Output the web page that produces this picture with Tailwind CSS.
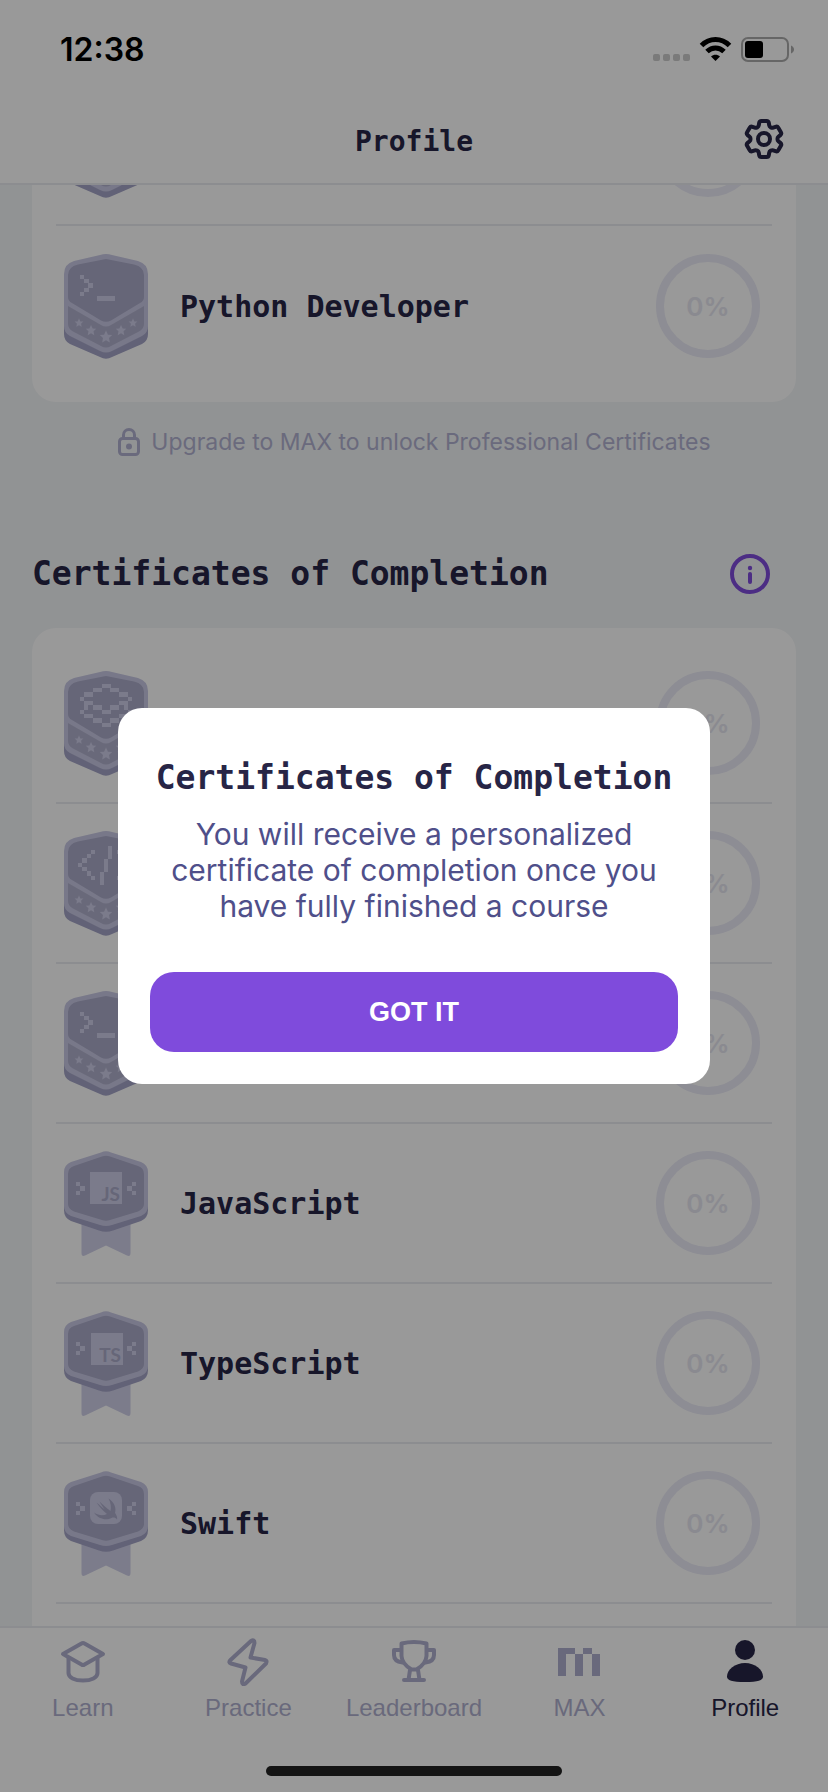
<!DOCTYPE html>
<html lang="en">
<head>
<meta charset="utf-8">
<meta name="viewport" content="width=device-width, initial-scale=1">
<title>Profile</title>
<script src="https://cdn.jsdelivr.net/npm/@tailwindcss/browser@4"></script>
</head>
<body class="bg-[#f2f5f7] font-['Liberation_Sans',sans-serif] text-[#272546]">

<!-- Shared symbols -->
<svg width="0" height="0" class="absolute" aria-hidden="true">
  <defs>
    <symbol id="star" viewBox="-1 -1 2 2" overflow="visible">
      <path d="M0-1 .3-.36 .95-.31 .46.15 .59.85 0 .5-.59.85-.46.15-.95-.31-.3-.36z"/>
    </symbol>
    <symbol id="shield" viewBox="0 0 84 105">
      <path fill="#a3a3c6" d="M0 20H84V80Q84 87 78 90L48 103Q42 106.500 36 103L6 90Q0 87 0 80z"/>
      <path fill="#c9c9e4" d="M36 1Q42-1 48 1L74 7Q84 10 84 20V72Q84 79 78 82L48 97Q42 100 36 97L6 82Q0 79 0 72V20Q0 10 10 7z"/>
      <path fill="#aaaac8" d="M42 5L70 10.500Q80 13 80 21V43Q80 47 76 49L47 66.500Q42 69 37 66.500L8 49Q4 47 4 43V21Q4 13 14 10.500z"/>
      <path fill="#b0b0cc" d="M4 52L37 71Q42 74 47 71L80 52V70Q80 75 75 77.500L47 92Q42 95 37 92L9 77.500Q4 75 4 70z"/>
      <g fill="#cdcde8">
        <use href="#star" x="10.500" y="64.500" width="9" height="9"/>
        <use href="#star" x="21.500" y="71" width="11" height="11"/>
        <use href="#star" x="35.500" y="76.500" width="13" height="13"/>
        <use href="#star" x="51.500" y="71" width="11" height="11"/>
        <use href="#star" x="64.500" y="64.500" width="9" height="9"/>
      </g>
    </symbol>
    <symbol id="medal" viewBox="0 0 84 105">
      <path fill="#cfcfe8" d="M17.500 70H66.500V102Q66.500 106 63 104.500L42 94.500 21 104.500Q17.500 106 17.500 102z"/>
      <path fill="#a3a3c6" d="M0 22H84V59Q84 67 77 70L49 79.500Q42 82 35 79.500L7 70Q0 67 0 59z"/>
      <path fill="#c9c9e4" d="M37 1.500Q42-1 47 1.500L77 11Q84 14 84 21V55Q84 62 77 65L48 74Q42 76 36 74L7 65Q0 62 0 55V21Q0 14 7 11z"/>
      <path fill="#aaaac8" d="M38 5.500Q42 4 46 5.500L74 15Q80 17 80 23V53Q80 58 74 60.500L46 69Q42 70.500 38 69L10 60.500Q4 58 4 53V23Q4 17 10 15z"/>
      <path fill="#cdcde8" d="M12 31h4v4h-4zM16 35h5v5h-5zM12 40h4v4h-4zM68 31h4v4h-4zM63 35h5v5h-5zM68 40h4v4h-4z"/>
    </symbol>
    <symbol id="prompt" viewBox="0 0 84 105">
      <path fill="#cdcde8" d="M16 21h4v4h-4zM20 25h5v4h-5zM24 29h5v5h-5zM20 34h5v4h-5zM16 38h4v4h-4zM33 42h18v5H33z"/>
    </symbol>
  </defs>
</svg>

<div class="flex h-screen flex-col">
  <!-- Status bar -->
  <div class="flex h-[100px] shrink-0 items-center justify-between bg-white pr-[34px] pl-[60px] text-black">
    <span class="font-['Inter',sans-serif] text-[32px] font-semibold">12:38</span>
    <svg class="h-[28px] w-[142px]" viewBox="652 36 142 28" aria-hidden="true">
      <g fill="#ccc"><rect x="653" y="54" width="7" height="7" rx="2"/><rect x="663" y="54" width="7" height="7" rx="2"/><rect x="673" y="54" width="7" height="7" rx="2"/><rect x="683" y="54" width="7" height="7" rx="2"/></g>
      <g fill="none" stroke="#000" stroke-width="5"><path d="M701.500 45.500C709.500 37.500 721.500 37.500 729.500 45.500"/><path d="M707 51.500C712 46.700 719 46.700 724 51.500"/></g>
      <path d="M715.500 61L711 56.500C713.500 54.200 717.500 54.200 720 56.500z"/>
      <rect x="742" y="38" width="46" height="23" rx="6" fill="none" stroke="#aaa" stroke-width="2"/>
      <rect x="745" y="41" width="18" height="17" rx="3"/>
      <path fill="#aaa" d="M791 45.500c4 1.500 4 6.500 0 8z"/>
    </svg>
  </div>

  <!-- Title bar -->
  <header class="grid h-[85px] shrink-0 grid-cols-[1fr_auto_1fr] items-center border-b-2 border-[#eaecf0] bg-white px-10">
    <h1 class="col-start-2 font-['DejaVu_Sans_Mono',monospace] text-[28px] font-bold">Profile</h1>
    <button class="mb-1.5 justify-self-end" aria-label="Settings">
      <svg class="size-12" viewBox="0 0 24 24" fill="none" stroke="currentColor" stroke-width="2" stroke-linejoin="round"><path d="M9.594 3.940c.09-.542.56-.94 1.110-.94h2.593c.55 0 1.020.398 1.110.94l.213 1.281c.063.374.313.686.645.87.074.04.147.083.22.127.325.196.72.257 1.075.124l1.217-.456a1.125 1.125 0 0 1 1.370.49l1.296 2.247a1.125 1.125 0 0 1-.26 1.431l-1.003.827c-.293.241-.438.613-.43.992a7.723 7.723 0 0 1 0 .255c-.008.378.137.75.43.991l1.004.827c.424.35.534.955.26 1.430l-1.298 2.247a1.125 1.125 0 0 1-1.369.491l-1.217-.456c-.355-.133-.75-.072-1.076.124a6.470 6.470 0 0 1-.22.128c-.331.183-.581.495-.644.869l-.213 1.281c-.09.543-.56.94-1.110.94h-2.594c-.55 0-1.019-.398-1.110-.94l-.213-1.281c-.062-.374-.312-.686-.644-.87a6.520 6.520 0 0 1-.22-.127c-.325-.196-.72-.257-1.076-.124l-1.217.456a1.125 1.125 0 0 1-1.369-.49l-1.297-2.247a1.125 1.125 0 0 1 .26-1.431l1.004-.827c.292-.24.437-.613.43-.991a6.932 6.932 0 0 1 0-.255c.007-.38-.138-.751-.43-.992l-1.004-.827a1.125 1.125 0 0 1-.26-1.430l1.297-2.247a1.125 1.125 0 0 1 1.370-.491l1.216.456c.356.133.751.072 1.076-.124.072-.044.146-.086.22-.128.332-.183.582-.495.644-.869l.214-1.280Z"/><circle cx="12" cy="12" r="3"/></svg>
    </button>
  </header>

  <!-- Scrolled list -->
  <main class="min-h-0 flex-1 overflow-hidden px-8">
    <ul class="-mt-[135px] rounded-3xl bg-white px-6 py-4">
      <li class="flex h-40 items-center justify-between border-b-2 border-[#eaecf0] pr-3 pl-2">
        <svg class="h-[105px] w-[84px]" aria-hidden="true"><use href="#shield"/></svg>
        <span class="size-[104px] rounded-full border-8 border-[#ebebf7]"></span>
      </li>
      <li class="flex h-40 items-center gap-8 pr-3 pl-2">
        <svg class="h-[105px] w-[84px]" aria-hidden="true"><use href="#shield"/><use href="#prompt"/></svg>
        <h3 class="flex-1 font-['DejaVu_Sans_Mono',monospace] text-[30px] font-bold">Python Developer</h3>
        <span class="flex size-[104px] items-center justify-center rounded-full border-8 border-[#ebebf7] font-['Inter',sans-serif] text-[26px] font-semibold text-[#e6e6f0]">0%</span>
      </li>
    </ul>

    <p class="mt-[18px] flex h-11 items-center justify-center gap-2.5 font-['Inter',sans-serif] text-[23px] text-[#b1b1d0]">
      <svg class="h-[28px] w-[24px]" viewBox="0 0 24 28" fill="none" stroke="currentColor" stroke-width="3" aria-hidden="true"><rect x="2.500" y="10.500" width="19" height="16" rx="3"/><path d="M6.500 10.500V7a5.500 5.500 0 0 1 11 0v3.500"/><circle cx="12" cy="18.500" r="3" fill="currentColor" stroke="none"/></svg>
      Upgrade to MAX to unlock Professional Certificates
    </p>

    <div class="mt-[88px] flex h-11 items-center justify-between pr-[26px]">
      <h2 class="font-['DejaVu_Sans_Mono',monospace] text-[33px] font-bold">Certificates of Completion</h2>
      <button class="text-[#7f4bdc]" aria-label="About certificates">
        <svg class="size-10" viewBox="0 0 40 40" fill="none" stroke="currentColor" stroke-linecap="round"><circle cx="20" cy="20" r="18" stroke-width="4"/><path d="M20 20v8" stroke-width="4"/><circle cx="20" cy="14" r="2.200" fill="currentColor" stroke="none"/></svg>
      </button>
    </div>

    <ul class="mt-8 rounded-3xl bg-white px-6 py-4">
      <li class="flex h-40 items-center justify-between border-b-2 border-[#eaecf0] pr-3 pl-2">
        <svg class="h-[105px] w-[84px]" viewBox="0 0 84 105" aria-hidden="true"><use href="#shield"/><path fill="#cdcde8" d="M38 13h9v4h-9zM29 17h9v4h-9zM46 17h9v4h-9zM20 21h9v5h-9zM55 21h9v5h-9zM16 26h4v4h-4zM64 26h4v4h-4zM20 30h9v4h-9zM55 30h9v4h-9zM20 34h4v5h-4zM29 34h9v5h-9zM46 34h9v5h-9zM60 34h4v5h-4zM16 39h4v4h-4zM38 39h9v4h-9zM64 39h4v4h-4zM20 43h9v4h-9zM55 43h9v4h-9zM29 47h9v5h-9zM46 47h9v5h-9zM38 52h9v4h-9z"/></svg>
        <span class="flex size-[104px] items-center justify-center rounded-full border-8 border-[#ebebf7] font-['Inter',sans-serif] text-[26px] font-semibold text-[#e6e6f0]">0%</span>
      </li>
      <li class="flex h-40 items-center justify-between border-b-2 border-[#eaecf0] pr-3 pl-2">
        <svg class="h-[105px] w-[84px]" viewBox="0 0 84 105" aria-hidden="true"><use href="#shield"/><path fill="#cdcde8" d="M27 19h4v4h-4zM23 23h4v4h-4zM18 27h5v5h-5zM14 32h4v4h-4zM18 36h5v4h-5zM23 40h4v5h-4zM27 45h4v4h-4zM44 15h4v13h-4zM40 28h4v13h-4zM36 41h4v13h-4zM53 19h4v4h-4zM57 23h4v4h-4zM61 27h5v5h-5zM66 32h4v4h-4zM61 36h5v4h-5zM57 40h4v5h-4zM53 45h4v4h-4z"/></svg>
        <span class="flex size-[104px] items-center justify-center rounded-full border-8 border-[#ebebf7] font-['Inter',sans-serif] text-[26px] font-semibold text-[#e6e6f0]">0%</span>
      </li>
      <li class="flex h-40 items-center justify-between border-b-2 border-[#eaecf0] pr-3 pl-2">
        <svg class="h-[105px] w-[84px]" aria-hidden="true"><use href="#shield"/><use href="#prompt"/></svg>
        <span class="flex size-[104px] items-center justify-center rounded-full border-8 border-[#ebebf7] font-['Inter',sans-serif] text-[26px] font-semibold text-[#e6e6f0]">0%</span>
      </li>
      <li class="flex h-40 items-center gap-8 border-b-2 border-[#eaecf0] pr-3 pl-2">
        <svg class="h-[105px] w-[84px]" viewBox="0 0 84 105" aria-hidden="true"><use href="#medal"/><path fill="#cdcde8" d="M26 21h32v32H26z"/><text x="56" y="50" text-anchor="end" font-size="19" font-weight="700" fill="#aaaac8" font-family="Lato, sans-serif">JS</text></svg>
        <h3 class="flex-1 font-['DejaVu_Sans_Mono',monospace] text-[30px] font-bold">JavaScript</h3>
        <span class="flex size-[104px] items-center justify-center rounded-full border-8 border-[#ebebf7] font-['Inter',sans-serif] text-[26px] font-semibold text-[#e6e6f0]">0%</span>
      </li>
      <li class="flex h-40 items-center gap-8 border-b-2 border-[#eaecf0] pr-3 pl-2">
        <svg class="h-[105px] w-[84px]" viewBox="0 0 84 105" aria-hidden="true"><use href="#medal"/><path fill="#cdcde8" d="M27 22h32v32H27z"/><text x="57" y="51" text-anchor="end" font-size="19" font-weight="700" fill="#aaaac8" font-family="Lato, sans-serif">TS</text></svg>
        <h3 class="flex-1 font-['DejaVu_Sans_Mono',monospace] text-[30px] font-bold">TypeScript</h3>
        <span class="flex size-[104px] items-center justify-center rounded-full border-8 border-[#ebebf7] font-['Inter',sans-serif] text-[26px] font-semibold text-[#e6e6f0]">0%</span>
      </li>
      <li class="flex h-40 items-center gap-8 border-b-2 border-[#eaecf0] pr-3 pl-2">
        <svg class="h-[105px] w-[84px]" viewBox="0 0 84 105" aria-hidden="true"><use href="#medal"/><rect x="26" y="21" width="32" height="32" rx="8" fill="#cdcde8"/><path fill="#aaaac8" d="M44.500 27.500c6 4 8 9.500 6.500 14.500 0 0 3 3.500 2 6.500-1.500-2-3.500-2.500-5.500-1.500-5 2.500-13 1.500-17.500-5.500 4.500 3 9 3.500 13 1.500-4-3-7.500-7-10.500-11.500 3 2.500 5.500 5 8.500 7-2-2-3.500-4.500-5.500-8 4 4 7.500 7 11 9.500 .8-3.500 .5-8-2-12.500z"/></svg>
        <h3 class="flex-1 font-['DejaVu_Sans_Mono',monospace] text-[30px] font-bold">Swift</h3>
        <span class="flex size-[104px] items-center justify-center rounded-full border-8 border-[#ebebf7] font-['Inter',sans-serif] text-[26px] font-semibold text-[#e6e6f0]">0%</span>
      </li>
      <li class="h-40"></li>
    </ul>
  </main>

  <!-- Tab bar -->
  <footer class="flex h-[166px] shrink-0 flex-col items-center justify-between border-t-2 border-[#eaecf0] bg-white pb-4">
    <nav class="grid w-full grid-cols-5 pt-2.5 text-2xl text-[#b0b0cf]">
      <a href="#" class="flex flex-col items-center gap-1.5">
        <svg class="size-12" viewBox="0 0 48 48" fill="none" stroke="currentColor" stroke-width="4" stroke-linejoin="round" aria-hidden="true"><path d="M22.500 5.500Q24 4.500 25.500 5.500L44 16 25.500 26.500Q24 27.500 22.500 26.500L4 16z"/><path d="M9.500 20v15c0 4.500 6 7.500 14.500 7.500s14.500-3 14.500-7.500V20"/></svg>
        Learn
      </a>
      <a href="#" class="flex flex-col items-center gap-1.5">
        <svg class="size-12" viewBox="0 0 48 48" fill="none" stroke="currentColor" stroke-width="4" stroke-linejoin="round" aria-hidden="true"><path d="M27 3L6.500 22Q4 24.500 7 25.500L21.500 29.500 18 43.500Q18 47.500 21.500 45.500L42 25.500Q43.500 22.500 41 22L26.500 19.500 30.500 5Q30.500 1 27 3z"/></svg>
        Practice
      </a>
      <a href="#" class="flex flex-col items-center gap-1.5">
        <svg class="size-12" viewBox="0 0 48 48" fill="none" stroke="currentColor" stroke-width="4" stroke-linejoin="round" stroke-linecap="round" aria-hidden="true"><path d="M11.500 5.500Q24 2.500 36.500 5.500V18Q36 26 26.500 31.500H21.500Q12 26 11.500 18z"/><path d="M11 12H4V17Q4 23.500 12.500 24.500M37 12h7v5q0 6.500-8.500 7.500M20 32l-1.500 10M28 32l1.500 10M14 42H34"/></svg>
        Leaderboard
      </a>
      <a href="#" class="flex flex-col items-center gap-1.5">
        <svg class="size-12" viewBox="0 0 48 48" fill="currentColor" aria-hidden="true"><path d="M2 10H19V16H27V10H36V16H44V38H36V16H27V38H19V16H10V38H2z"/></svg>
        MAX
      </a>
      <a href="#" aria-current="page" class="flex flex-col items-center gap-1.5 text-[#272546]">
        <svg class="size-12" viewBox="0 0 48 48" fill="currentColor" aria-hidden="true"><circle cx="24" cy="12" r="10"/><path d="M24 25C34 25 42 31.500 42 38.500 42 42.500 37 44 24 44S6 42.500 6 38.500C6 31.500 14 25 24 25z"/></svg>
        Profile
      </a>
    </nav>
    <div class="h-2.5 w-[296px] rounded-full bg-[#222]"></div>
  </footer>
</div>

<!-- Dialog over the dimmed page -->
<div class="fixed inset-0 flex items-center justify-center bg-black/40 px-8">
  <div role="dialog" aria-modal="true" aria-labelledby="dialog-title" class="flex w-full max-w-[592px] flex-col rounded-3xl bg-white px-8 pt-12 pb-8 text-center">
    <h2 id="dialog-title" class="-mx-4 font-['DejaVu_Sans_Mono',monospace] text-[33px] leading-[44px] font-bold">Certificates of Completion</h2>
    <p class="mt-4 font-['Inter',sans-serif] text-[30px] leading-9 text-[#4f4f8a]">You will receive a personalized<br>certificate of completion once you<br>have fully finished a course</p>
    <button class="mt-12 h-20 rounded-3xl bg-[#7f4bdc] text-[27px] font-bold text-white">GOT IT</button>
  </div>
</div>
</body>
</html>
